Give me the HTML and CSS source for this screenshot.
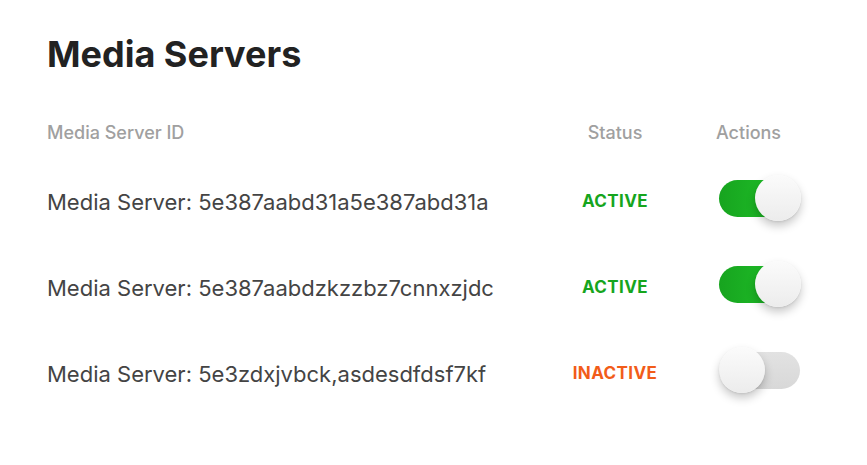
FILE: index.html
```html
<!DOCTYPE html>
<html>

<head>
  <meta charset="utf-8">
  <title>Media Servers</title>
  <link rel="stylesheet" href="styles.css">
</head>

<body>
  <div class="page">
    <h1>Media Servers</h1>

    <div class="servers">
      <div class="head">Media Server ID</div>
      <div class="head center">Status</div>
      <div class="head">Actions</div>

      <div class="cell name">Media Server: 5e387aabd31a5e387abd31a</div>
      <div class="cell center"><span class="status active">ACTIVE</span></div>
      <div class="cell"><span class="toggle on"><span class="knob"></span></span></div>

      <div class="cell name">Media Server: 5e387aabdzkzzbz7cnnxzjdc</div>
      <div class="cell center"><span class="status active">ACTIVE</span></div>
      <div class="cell"><span class="toggle on"><span class="knob"></span></span></div>

      <div class="cell name">Media Server: 5e3zdxjvbck,asdesdfdsf7kf</div>
      <div class="cell center"><span class="status inactive">INACTIVE</span></div>
      <div class="cell"><span class="toggle"><span class="knob"></span></span></div>
    </div>
  </div>
</body>

</html>
```

FILE: styles.css
```css
body {
  margin: 0;
  background: #ffffff;
  font-family: Inter, "Noto Sans", sans-serif;
}

.page {
  padding: 32px 31px 0 47px;
}

h1 {
  margin: 0 0 46px 0;
  font-size: 36px;
  line-height: 44px;
  font-weight: 700;
  color: #222222;
}

/* table of servers */
.servers {
  display: grid;
  grid-template-columns: 1fr 130px 120px;
  column-gap: 36px;
  grid-auto-rows: 86px;
  grid-template-rows: 37px;
  align-items: center;
}

.head {
  align-self: start;
  font-size: 18px;
  line-height: 22px;
  font-weight: 500;
  color: #a0a0a0;
}

.center {
  text-align: center;
}

.cell {
  font-size: 22px;
  line-height: 26px;
  color: #444444;
}

.status {
  display: inline-block;
  margin-bottom: 4px;
  font-size: 17px;
  font-weight: 700;
  letter-spacing: 0.4px;
}

.active {
  color: #16a51d;
}

.inactive {
  color: #f25c19;
}

/* switch */
.toggle {
  position: relative;
  display: block;
  width: 81px;
  height: 37px;
  margin: -8px 0 0 3px;
  border-radius: 19px;
  background: linear-gradient(to bottom, #e2e2e2, #d8d8d8);
}

.toggle.on {
  background: linear-gradient(to right, #17a41f, #22c82b);
}

.knob {
  position: absolute;
  top: -5px;
  left: 0;
  width: 46px;
  height: 46px;
  border-radius: 50%;
  background: linear-gradient(to bottom, #fbfbfb, #ececec);
  box-shadow: 0 5px 10px rgba(0, 0, 0, 0.22), 0 1px 2px rgba(0, 0, 0, 0.08);
}

.toggle.on .knob {
  left: auto;
  right: -1px;
}
```
